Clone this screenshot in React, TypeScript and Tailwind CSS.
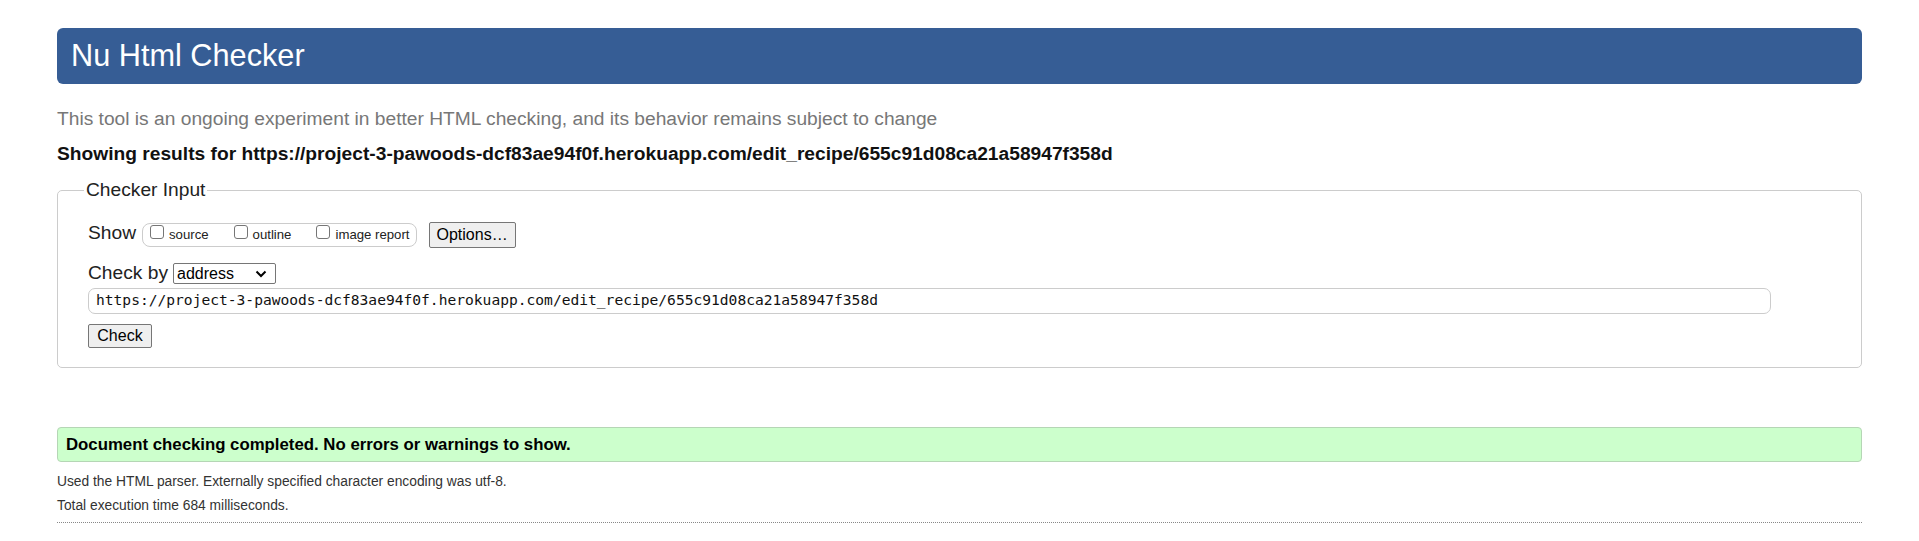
import React from "react";

function Box({ label }: { label: string }) {
  return (
    <span className="flex items-center">
      <span className="mb-[6px] inline-block h-[14px] w-[14px] rounded-[3px] border border-[#767676] bg-white" />
      <span className="ml-[5px] leading-none">{label}</span>
    </span>
  );
}

export default function App() {
  return (
    <div className="min-h-[541px] bg-white px-[57px] pt-[28px] font-['Liberation_Sans',Arial,sans-serif] text-[19.2px] text-[#222]">
      <header className="flex h-[56px] items-center rounded-[6px] bg-[#365d95] pl-[14px]">
        <h1 className="text-[30.7px] font-normal leading-none text-white">Nu Html Checker</h1>
      </header>

      <p className="mt-[20.5px] leading-[28.8px] text-[#777]">
        This tool is an ongoing experiment in better HTML checking, and its behavior remains subject to change
      </p>
      <p className="mt-[6.5px] font-bold leading-[28.8px] text-[#111]">
        Showing results for https://project-3-pawoods-dcf83ae94f0f.herokuapp.com/edit_recipe/655c91d08ca21a58947f358d
      </p>

      <fieldset className="mt-[7.7px] rounded-[5px] border border-[#ccc] px-[30px] pb-[19px]">
        <legend className="-ml-[4px] px-[2px] leading-[28.8px]">Checker Input</legend>

        <div className="mt-[16.6px] flex h-[26px] items-center">
          <span className="mb-[4px] leading-none">Show</span>
          <div className="ml-[6px] flex h-[24px] items-center gap-[25px] rounded-[8px] border border-[#ccc] pl-[7px] pr-[6px] text-[13.2px] text-[#222]">
            <Box label="source" />
            <Box label="outline" />
            <Box label="image report" />
          </div>
          <button className="ml-[12px] h-[26px] rounded-[2px] border border-[#767676] bg-[#efefef] px-[7px] text-[16px] leading-none text-black">
            Options…
          </button>
        </div>

        <div className="mt-[15px] flex h-[22px] items-center">
          <span className="mb-[3px] leading-none">Check by</span>
          <div className="ml-[5px] flex h-[21px] w-[103px] items-center justify-between rounded-[2px] border border-[#767676] pl-[3px] pr-[8px] text-[16px] leading-none text-black">
            <span>address</span>
            <svg width="12" height="8" viewBox="0 0 12 8">
              <path d="M1.5 1.5 L6 6 L10.5 1.5" stroke="#000" strokeWidth="2" fill="none" />
            </svg>
          </div>
        </div>

        <div className="mt-[3px] flex h-[26px] w-[1683px] items-center rounded-[7px] border border-[#ccc] pl-[7px] font-['DejaVu_Sans_Mono',monospace] text-[14.6px] leading-none text-[#111]">
          https://project-3-pawoods-dcf83ae94f0f.herokuapp.com/edit_recipe/655c91d08ca21a58947f358d
        </div>

        <button className="mt-[10px] block h-[24px] w-[64px] rounded-[2px] border border-[#767676] bg-[#efefef] text-[16px] leading-none text-black">
          Check
        </button>
      </fieldset>

      <div className="mt-[59.8px] flex h-[35px] items-center rounded-[4px] border border-[#b5d6b5] bg-[#ccffcc] pl-[8px] text-[16.8px] font-bold leading-none text-black">
        Document checking completed. No errors or warnings to show.
      </div>

      <p className="mt-[7.7px] text-[13.8px] leading-[24px] text-[#333]">
        Used the HTML parser. Externally specified character encoding was utf-8.
      </p>
      <p className="text-[13.8px] leading-[24px] text-[#333]">Total execution time 684 milliseconds.</p>
      <div className="mt-[3.5px] border-t border-dotted border-[#888]" />
    </div>
  );
}
